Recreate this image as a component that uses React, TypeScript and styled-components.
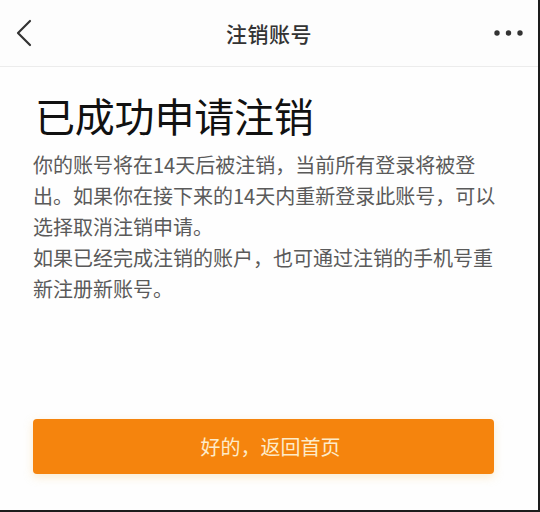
import React from "react";
import styled, { createGlobalStyle } from "styled-components";

const Global = createGlobalStyle`
  html, body { margin: 0; padding: 0; background: #fff; }
  body { font-family: "Noto Sans CJK SC", "Noto Sans", sans-serif; }
  * { box-sizing: border-box; }
`;

const Screen = styled.div`
  width: 540px;
  height: 512px;
  display: flex;
  flex-direction: column;
  background: #fefefe;
  border-right: 2px solid #1c1c1c;
  border-bottom: 2px solid #1c1c1c;
  overflow: hidden;
`;

const NavBar = styled.header`
  height: 67px;
  flex: none;
  display: grid;
  grid-template-columns: 80px 1fr 80px;
  align-items: center;
  border-bottom: 1px solid #ececec;
  background: #fdfdfd;
`;

const NavSide = styled.div<{ $align: "start" | "end" }>`
  display: flex;
  justify-content: ${(p) => (p.$align === "start" ? "flex-start" : "flex-end")};
  align-items: center;
  padding: ${(p) => (p.$align === "start" ? "0 0 0 15px" : "0 14px 0 0")};
`;

const NavTitle = styled.h1`
  margin: 0;
  text-align: center;
  font-size: 21px;
  font-weight: 500;
  color: #333;
  letter-spacing: 0.5px;
`;

const Content = styled.main`
  flex: 1;
  display: flex;
  flex-direction: column;
  padding: 0 44px 36px 33px;
`;

const Heading = styled.h2`
  margin: 24px 0 0 2px;
  font-size: 40px;
  line-height: 48px;
  font-weight: 400;
  color: #111;
  letter-spacing: -0.2px;
`;

const Paragraph = styled.p`
  margin: 0;
  margin-right: -4px;
  font-size: 20px;
  line-height: 31px;
  color: #5a5a5a;
`;

const Texts = styled.div`
  margin-top: 10px;
`;

const PrimaryButton = styled.button`
  margin-top: auto;
  height: 55px;
  width: 100%;
  border: none;
  border-radius: 4px;
  padding: 0 0 0 14px;
  background: #f5840d;
  color: #fdebc9;
  font-family: inherit;
  font-size: 20px;
  box-shadow: 0 3px 10px rgba(240, 200, 120, 0.35);
  cursor: pointer;
`;

const BackIcon = () => (
  <svg width="18" height="28" viewBox="0 0 18 28">
    <path d="M15 2 L3 14 L15 26" fill="none" stroke="#333" strokeWidth="2.2" strokeLinecap="round" strokeLinejoin="round" />
  </svg>
);

const MoreIcon = () => (
  <svg width="30" height="8" viewBox="0 0 30 8">
    <circle cx="3" cy="4" r="2.7" fill="#333" />
    <circle cx="14.5" cy="4" r="2.7" fill="#333" />
    <circle cx="26" cy="4" r="2.7" fill="#333" />
  </svg>
);

export default function App() {
  return (
    <>
      <Global />
      <Screen>
        <NavBar>
          <NavSide $align="start">
            <BackIcon />
          </NavSide>
          <NavTitle>注销账号</NavTitle>
          <NavSide $align="end">
            <MoreIcon />
          </NavSide>
        </NavBar>
        <Content>
          <Heading>已成功申请注销</Heading>
          <Texts>
            <Paragraph>
              你的账号将在14天后被注销，当前所有登录将被登出。如果你在接下来的14天内重新登录此账号，可以选择取消注销申请。
            </Paragraph>
            <Paragraph>如果已经完成注销的账户，也可通过注销的手机号重新注册新账号。</Paragraph>
          </Texts>
          <PrimaryButton>好的，返回首页</PrimaryButton>
        </Content>
      </Screen>
    </>
  );
}
